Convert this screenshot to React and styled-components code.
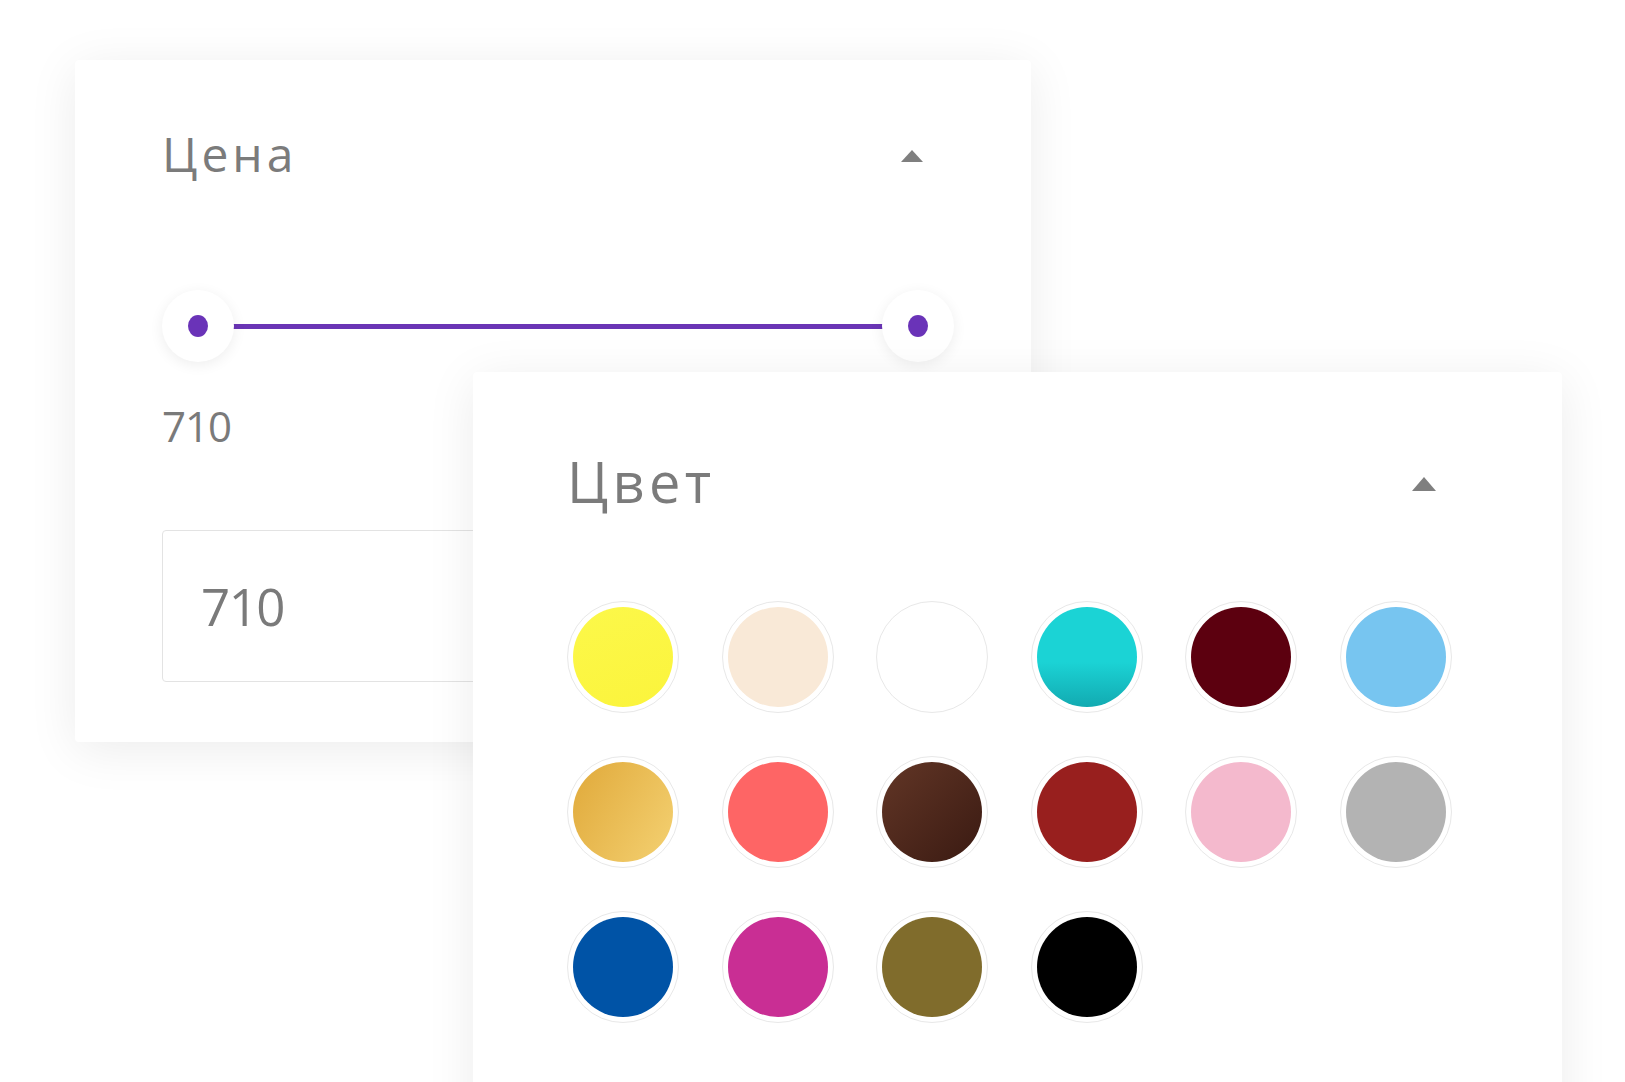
import React from "react";
import styled, { createGlobalStyle } from "styled-components";

const Global = createGlobalStyle`
  html, body {
    margin: 0;
    padding: 0;
    background: #ffffff;
    overflow: hidden;
    width: 1625px;
    height: 1082px;
  }
  * { box-sizing: border-box; }
`;

const Stage = styled.div`
  position: relative;
  width: 1625px;
  height: 1082px;
  padding: 60px 0 0 75px;
  font-family: "Open Sans", "Noto Sans", sans-serif;
  color: #7a7a7a;
`;

const Card = styled.section`
  background: #ffffff;
  border-radius: 4px;
  box-shadow: 0 8px 50px rgba(0, 0, 0, 0.08);
`;

const PriceCard = styled(Card)`
  width: 956px;
  height: 682px;
  padding: 65px 77px 0 87px;
  display: flex;
  flex-direction: column;
`;

const ColorCard = styled(Card)`
  position: absolute;
  left: 473px;
  top: 372px;
  width: 1089px;
  height: 780px;
  padding: 76px 110px 0 94px;
  display: flex;
  flex-direction: column;
`;

const Header = styled.div`
  display: flex;
  align-items: center;
  justify-content: space-between;
  padding-right: ${(p) => p.$inset}px;
`;

const Title = styled.h2`
  margin: 0;
  font-weight: 400;
  font-size: ${(p) => p.$size}px;
  line-height: 1.2;
  letter-spacing: ${(p) => p.$spacing}px;
  color: #7b7b7b;
`;

const Caret = styled.span`
  width: 0;
  height: 0;
  margin-top: 4px;
  border-left: ${(p) => p.$w}px solid transparent;
  border-right: ${(p) => p.$w}px solid transparent;
  border-bottom: ${(p) => p.$h}px solid #7f7f7f;
`;

const Slider = styled.div`
  position: relative;
  margin-top: 107px;
  height: 72px;
  display: flex;
  align-items: center;
  justify-content: space-between;
`;

const Track = styled.div`
  position: absolute;
  left: 36px;
  right: 36px;
  top: 34px;
  height: 5px;
  background: #6a35b5;
`;

const Thumb = styled.div`
  position: relative;
  width: 72px;
  height: 72px;
  border-radius: 50%;
  background: #ffffff;
  box-shadow: 0 3px 14px rgba(0, 0, 0, 0.07);
  display: flex;
  align-items: center;
  justify-content: center;
  &::after {
    content: "";
    width: 20px;
    height: 22px;
    border-radius: 50%;
    background: #6a33b8;
  }
`;

const ValueLabel = styled.div`
  margin-top: 39px;
  font-size: 42px;
  line-height: 1.2;
  color: #7a7a7a;
  letter-spacing: -1px;
`;

const ValueInput = styled.input`
  margin-top: 79px;
  width: 420px;
  height: 152px;
  border: 1.5px solid #e3e3e3;
  border-radius: 4px;
  padding: 0 0 0 38px;
  font-family: "Open Sans", "Noto Sans", sans-serif;
  font-size: 51px;
  letter-spacing: -1.5px;
  color: #7a7a7a;
  background: #ffffff;
  outline: none;
`;

const Swatches = styled.div`
  margin-top: 86px;
  display: grid;
  grid-template-columns: repeat(6, 112px);
  column-gap: 42.5px;
  row-gap: 43px;
`;

const Swatch = styled.button`
  width: 112px;
  height: 112px;
  padding: 5px;
  border-radius: 50%;
  border: 1.5px solid #e8e8e8;
  background: #ffffff;
  cursor: pointer;
  &::before {
    content: "";
    display: block;
    width: 100%;
    height: 100%;
    border-radius: 50%;
    background: ${(p) => p.$fill};
  }
`;

const colors = [
  "linear-gradient(160deg, #fcf84a, #fbf43c)",
  "#f9e9d7",
  "#ffffff",
  "linear-gradient(180deg, #1bd3d5 55%, #12aab1)",
  "#5c000f",
  "#77c5f0",
  "linear-gradient(120deg, #e0a93a, #f4d172)",
  "#fe6565",
  "linear-gradient(135deg, #623626, #3a1a12)",
  "#981f1e",
  "#f4b9cd",
  "#b3b3b3",
  "#0053a6",
  "#c92e94",
  "#806c2c",
  "#000000",
];

export default function App() {
  return (
    <>
      <Global />
      <Stage>
        <PriceCard>
          <Header $inset={31}>
            <Title $size={48} $spacing={4}>Цена</Title>
            <Caret $w={11} $h={12} />
          </Header>
          <Slider>
            <Track />
            <Thumb />
            <Thumb />
          </Slider>
          <ValueLabel>710</ValueLabel>
          <ValueInput defaultValue="710" readOnly />
        </PriceCard>
        <ColorCard>
          <Header $inset={16}>
            <Title $size={56} $spacing={4.3}>Цвет</Title>
            <Caret $w={12.5} $h={14} />
          </Header>
          <Swatches>
            {colors.map((c, i) => (
              <Swatch key={i} $fill={c} aria-label={`color ${i + 1}`} />
            ))}
          </Swatches>
        </ColorCard>
      </Stage>
    </>
  );
}
